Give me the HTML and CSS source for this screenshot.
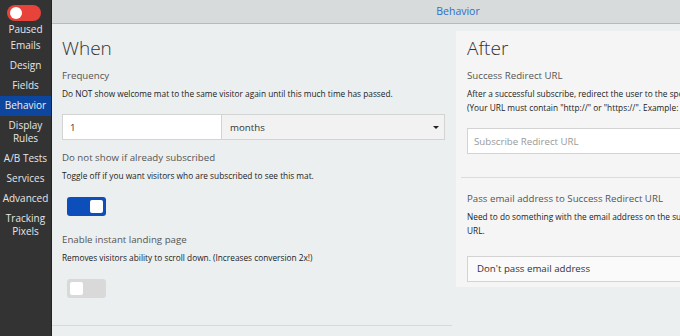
FILE: index.html
```html
<!DOCTYPE html>
<html lang="en">
<head>
    <meta charset="UTF-8">
    <title>Behavior</title>
    <link rel="stylesheet" href="styles.css">
</head>
<body>
<div class="app">
    <nav class="sidebar">
        <div class="pause-toggle"><span class="knob"></span></div>
        <div class="pause-label">Paused</div>
        <a class="nav-item" href="#">Emails</a>
        <a class="nav-item" href="#">Design</a>
        <a class="nav-item" href="#">Fields</a>
        <a class="nav-item active" href="#">Behavior</a>
        <a class="nav-item" href="#">Display<br>Rules</a>
        <a class="nav-item" href="#">A/B Tests</a>
        <a class="nav-item" href="#">Services</a>
        <a class="nav-item" href="#">Advanced</a>
        <a class="nav-item" href="#">Tracking<br>Pixels</a>
    </nav>

    <div class="main">
        <div class="topbar">Behavior</div>
        <div class="columns">
            <section class="col-when">
                <h1>When</h1>
                <div class="field">
                    <div class="label">Frequency</div>
                    <p class="help">Do NOT show welcome mat to the same visitor again until this much time has passed.</p>
                    <div class="freq-row">
                        <input type="text" class="freq-num" value="1">
                        <div class="freq-unit">months<span class="caret"></span></div>
                    </div>
                </div>
                <div class="field">
                    <div class="label">Do not show if already subscribed</div>
                    <p class="help">Toggle off if you want visitors who are subscribed to see this mat.</p>
                    <div class="switch on"><span class="knob"></span></div>
                </div>
                <div class="field">
                    <div class="label">Enable instant landing page</div>
                    <p class="help">Removes visitors ability to scroll down. (Increases conversion 2x!)</p>
                    <div class="switch"><span class="knob"></span></div>
                </div>
            </section>

            <section class="col-after">
                <h1>After</h1>
                <div class="field">
                    <div class="label">Success Redirect URL</div>
                    <p class="help">After a successful subscribe, redirect the user to the specified URL instead of showing the thank you message.<br>(Your URL must contain "http://" or "https://". Example: https://www.example.com)</p>
                    <input type="text" class="url-input" placeholder="Subscribe Redirect URL">
                </div>
                <div class="field divided">
                    <div class="label">Pass email address to Success Redirect URL</div>
                    <p class="help">Need to do something with the email address on the success page? We can append it to your Success Redirect<br>URL.</p>
                    <div class="pass-select">Don't pass email address</div>
                </div>
            </section>
        </div>
    </div>
</div>
</body>
</html>
```

FILE: styles.css
```css
body {
    margin: 0;
    font-family: "Open Sans", Arial, sans-serif;
    overflow: hidden;
    background-color: #eceff0;
}

.app {
    display: flex;
    height: 336px;
}

/* sidebar */
.sidebar {
    flex: none;
    width: 51px;
    background-color: #333;
    border-right: 1px solid #222;
    display: flex;
    flex-direction: column;
    align-items: stretch;
    padding-top: 5px;
}

.pause-toggle {
    width: 34px;
    height: 16px;
    margin-left: 7px;
    border-radius: 8px;
    background-color: #e8433a;
    display: flex;
    align-items: center;
    padding-left: 3px;
    box-sizing: border-box;
}

.pause-toggle .knob {
    width: 12px;
    height: 12px;
    border-radius: 50%;
    background-color: #fff;
}

.pause-label,
.nav-item {
    color: #e6e6e6;
    font-size: 10px;
    text-align: center;
    text-decoration: none;
    line-height: 13px;
}

.pause-label {
    margin-top: 2px;
}

.nav-item {
    padding: 3px 0 4px;
}

.nav-item.active {
    background-color: #0c469f;
    color: #f0f0f0;
}

/* main */
.main {
    flex: none;
    width: 812px;
}

.topbar {
    height: 23px;
    line-height: 23px;
    background-color: #d8dbdc;
    border-bottom: 1px solid #b8bbbc;
    text-align: center;
    color: #2c6fc8;
    font-size: 10.5px;
}

.columns {
    display: flex;
    align-items: flex-start;
}

.col-when {
    flex: none;
    width: 383px;
    padding: 9px 7px 0 10px;
    height: 292px;
    border-bottom: 1px solid #d7dadb;
}

.col-after {
    flex: none;
    width: 700px;
    margin-left: 4px;
    margin-top: 7px;
    padding: 2px 11px 5px;
    background-color: #f5f5f5;
}

h1 {
    margin: 0;
    font-weight: 300;
    font-size: 19px;
    line-height: 30px;
    color: #333;
}

.field {
    margin-top: 5px;
}

.label {
    font-size: 9.7px;
    color: #555;
    line-height: 16px;
}

.help {
    margin: 3px 0 0;
    font-size: 8.3px;
    line-height: 14px;
    color: #222;
}

.freq-row {
    display: flex;
    margin-top: 13px;
    margin-bottom: 10px;
    border: 1px solid #d3d3d3;
}

.freq-num {
    width: 159px;
    height: 24px;
    box-sizing: border-box;
    border: none;
    border-right: 1px solid #d3d3d3;
    padding: 0 7px;
    font-family: inherit;
    font-size: 9.7px;
    color: #333;
    background-color: #fff;
}

.freq-unit {
    flex: 1;
    display: flex;
    align-items: center;
    justify-content: space-between;
    padding: 0 5px 0 8px;
    font-size: 9.7px;
    color: #333;
    background-color: #f2f2f2;
}

.caret {
    width: 0;
    height: 0;
    border-left: 3px solid transparent;
    border-right: 3px solid transparent;
    border-top: 3px solid #222;
}

.switch {
    width: 39px;
    height: 19px;
    margin: 14px 0 16px 5px;
    border-radius: 3px;
    background-color: #d9d9d9;
    display: flex;
    align-items: center;
    padding: 0 3px;
    box-sizing: border-box;
}

.switch .knob {
    width: 13px;
    height: 13px;
    border-radius: 2px;
    background-color: #fff;
}

.switch.on {
    background-color: #0d4fba;
    justify-content: flex-end;
}

.url-input {
    display: block;
    width: 100%;
    height: 26px;
    margin-top: 13px;
    box-sizing: border-box;
    border: 1px solid #d3d3d3;
    background-color: #fff;
    padding: 0 6px;
    font-family: inherit;
    font-size: 9.7px;
}

.url-input::placeholder {
    color: #999;
}

.field.divided {
    margin: 23px -6px 0;
    padding: 13px 6px 0;
    border-top: 1px solid #dcdcdc;
}

.pass-select {
    margin-top: 18px;
    height: 24px;
    line-height: 24px;
    border: 1px solid #d3d3d3;
    background-color: #fafafa;
    padding: 0 9px;
    font-size: 9.7px;
    color: #333;
}
```
